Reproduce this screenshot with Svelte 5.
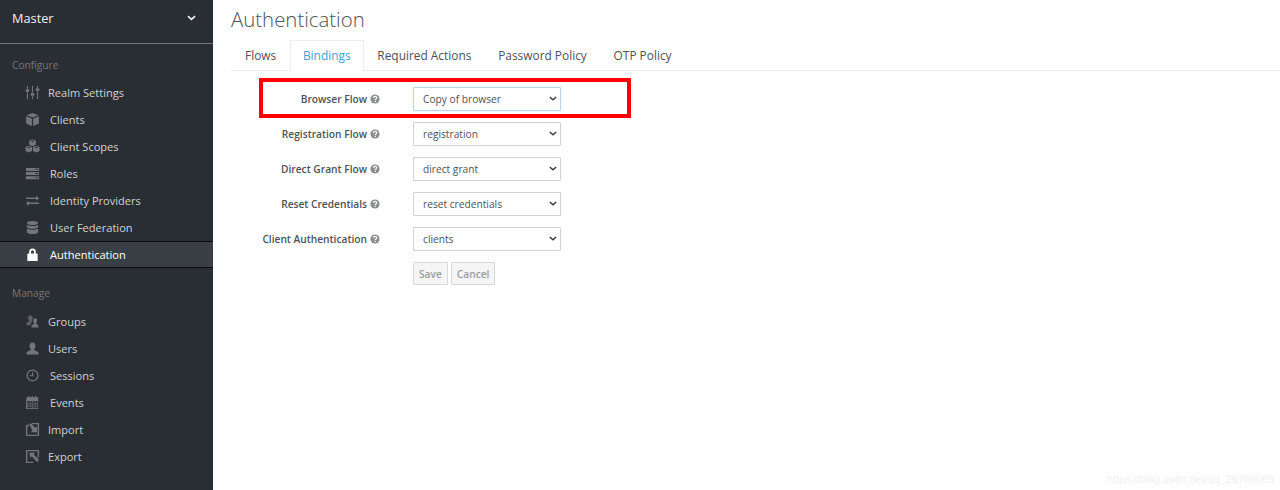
<script lang="ts">
	const configure = [
		{ id: 'sliders', label: 'Realm Settings', gap: 'narrow' },
		{ id: 'cube', label: 'Clients' },
		{ id: 'cubes', label: 'Client Scopes' },
		{ id: 'server', label: 'Roles' },
		{ id: 'exchange', label: 'Identity Providers' },
		{ id: 'database', label: 'User Federation' },
		{ id: 'lock', label: 'Authentication', active: true }
	];
	const manage = [
		{ id: 'users', label: 'Groups', gap: 'narrow' },
		{ id: 'user', label: 'Users', gap: 'narrow' },
		{ id: 'clock', label: 'Sessions' },
		{ id: 'calendar', label: 'Events' },
		{ id: 'import', label: 'Import', gap: 'narrow' },
		{ id: 'export', label: 'Export', gap: 'narrow' }
	];
	const sections = [
		{ title: 'Configure', items: configure },
		{ title: 'Manage', items: manage }
	];
	const tabs = ['Flows', 'Bindings', 'Required Actions', 'Password Policy', 'OTP Policy'];
	const bindings = [
		{ label: 'Browser Flow', value: 'Copy of browser', focus: true },
		{ label: 'Registration Flow', value: 'registration' },
		{ label: 'Direct Grant Flow', value: 'direct grant' },
		{ label: 'Reset Credentials', value: 'reset credentials' },
		{ label: 'Client Authentication', value: 'clients' }
	];
</script>

{#snippet icon(id)}
	<svg class="nav-icon" viewBox="0 0 16 16" fill="currentColor" aria-hidden="true">
		{#if id === 'sliders'}
			<path d="M2 1h1.200v3H2zM2 8h1.200v7H2zM7.400 1h1.200v7H7.400zM7.400 12h1.200v3H7.400zM12.800 1H14v2h-1.200zM12.800 7H14v8h-1.200z" />
			<path d="M.8 4.400h3.600v3H.8zM6.200 8.400h3.600v3H6.200zM11.600 3.400h3.600v3h-3.600z" />
		{:else if id === 'cube'}
			<path d="M8 1 14.500 3.400 8 5.800 1.500 3.400zM1.200 4.600 7.300 6.900V15L1.200 12.300zM8.700 6.900 14.800 4.600V12.300L8.700 15z" />
		{:else if id === 'cubes'}
			<path d="M8 0.500 11.600 1.900V6L8 7.500 4.400 6V1.900zM4 7.200 7.500 8.600V12.800L4 14.400.5 12.800V8.600zM12 7.200 15.500 8.600V12.800L12 14.400 8.500 12.800V8.600z" />
			<path fill="#292e34" d="M4.200 8.300 4 8.200 2 9 4 9.800 6 9zM12.200 8.300 12 8.200 10 9 12 9.800 14 9zM8 1.500 6 2.300 8 3.100 10 2.300z" />
		{:else if id === 'server'}
			<path d="M1 2h14v3.200H1zM1 6.400h14v3.200H1zM1 10.800h14V14H1z" />
			<path fill="#292e34" d="M11 3h3v1h-3zM11 7.500h3v1h-3zM11 11.900h3v1h-3z" />
		{:else if id === 'exchange'}
			<path d="M1 4.800h11V3l3 2.700-3 2.600V6.500H1zM15 10H4V8.300L1 11l3 2.600v-1.900h11z" />
		{:else if id === 'database'}
			<path d="M8 1c3.400 0 6 .9 6 2.200S11.400 5.400 8 5.400 2 4.500 2 3.200 4.600 1 8 1zM2 5c1 1 3.500 1.500 6 1.500S13 6 14 5v2.200C14 8.500 11.400 9.400 8 9.400S2 8.500 2 7.200zM2 9c1 1 3.500 1.500 6 1.500S13 10 14 9v3.800C14 14.100 11.400 15 8 15S2 14.100 2 12.800z" />
		{:else if id === 'lock'}
			<path fill-rule="evenodd" d="M4.500 7V5a3.500 3.500 0 0 1 7 0v2h1.300a.7.700 0 0 1 .7.700v6.600a.7.700 0 0 1-.7.700H3.200a.7.700 0 0 1-.7-.7V7.700a.7.700 0 0 1 .7-.7zm1.900 0h3.200V5a1.600 1.600 0 0 0-3.200 0z" />
		{:else if id === 'users'}
			<path opacity=".7" d="M6 1.500a2.300 2.300 0 0 1 2 3.500 3 3 0 0 1-1 2l1 1.200-1.800 1.300V12H1.500v-1.500c0-1.500 2-1.800 2.700-2.700V7A3 3 0 0 1 3.500 5 2.300 2.300 0 0 1 6 1.500z" />
			<path d="M10.500 4.500a2.400 2.400 0 0 1 2.300 2.800c0 1-.4 1.700-.9 2.300v.8c.8.800 2.600 1 2.600 2.600V14.500H7v-1.500c0-1.600 1.800-1.800 2.600-2.600v-.8c-.5-.6-.9-1.300-.9-2.300a2.400 2.400 0 0 1 1.800-2.800z" />
		{:else if id === 'user'}
			<path d="M8 1.500c2 0 3.200 1.400 3.200 3.500 0 1.500-.6 2.700-1.400 3.500v1.200c1.200 1 4.700 1.200 4.700 3.500v1.300h-13v-1.300c0-2.300 3.500-2.500 4.700-3.500V8.500C5.400 7.700 4.800 6.500 4.800 5c0-2.100 1.200-3.500 3.200-3.500z" />
		{:else if id === 'clock'}
			<path fill-rule="evenodd" d="M8 1.500a6.500 6.500 0 1 1 0 13 6.500 6.500 0 0 1 0-13zm0 1.400a5.100 5.100 0 1 0 0 10.200A5.100 5.100 0 0 0 8 2.900zM8.700 4.500v4.400H5V7.800h2.500V4.500z" />
		{:else if id === 'calendar'}
			<path fill-rule="evenodd" d="M1.500 2.500h2V1h1.500v1.500h2V1h1.500v1.500h2V1h1.500v1.500h2V15h-13zm1 4v7.500h11V6.500zM5 6.500h.8v7.500H5zm2.700 0h.8v7.500h-.8zm2.700 0h.8v7.500h-.8zM2.500 9h11v.8h-11zm0 2.500h11v.8h-11z" />
		{:else if id === 'import'}
			<path fill-rule="evenodd" d="M1 3h3.500v1.500h-2v9h11v-11h-6V1H15v14H1z" />
			<path d="M4.500 2.500 6 1l5 5 1.800-1.800V11H6l1.900-1.900z" />
		{:else if id === 'export'}
			<path fill-rule="evenodd" d="M1 1h14v8h-1.500V2.500h-11v11H9V15H1z" />
			<path d="M4.500 4H11L9.200 5.800 15 11.500 13 14 7.200 7.800 5.500 9.500z" />
		{/if}
	</svg>
{/snippet}

<div class="page">
	<aside class="sidebar">
		<div class="realm">
			<span>Master</span>
			<svg class="realm-caret" viewBox="0 0 10 6" aria-hidden="true">
				<path d="M1 1l4 3.600L9 1" fill="none" stroke="currentColor" stroke-width="1.800" />
			</svg>
		</div>
		{#each sections as section (section.title)}
			<h2 class="section-title">{section.title}</h2>
			<ul class="nav-list">
				{#each section.items as item (item.label)}
					<li class="nav-item" class:active={item.active} class:narrow={item.gap === 'narrow'}>
						{@render icon(item.id)}
						<span>{item.label}</span>
					</li>
				{/each}
			</ul>
		{/each}
	</aside>

	<main class="content">
		<h1>Authentication</h1>
		<nav class="tabs">
			{#each tabs as tab (tab)}
				<a class="tab" class:current={tab === 'Bindings'} href="#{tab}">{tab}</a>
			{/each}
		</nav>
		<form class="bindings">
			{#each bindings as row (row.label)}
				<div class="row">
					<span class="row-label">
						{row.label}
						<svg class="help" viewBox="0 0 10 10" aria-hidden="true">
							<circle cx="5" cy="5" r="4.600" fill="currentColor" />
							<path d="M3.500 3.900c0-2 3.200-2 3.200-.1 0 1.200-1.500 1.200-1.500 2.500" fill="none" stroke="#fff" stroke-width="1.100" />
							<path d="M4.600 6.900h1.200v1.200H4.600z" fill="#fff" />
						</svg>
					</span>
					<div class="select-wrap">
						<select class:focus={row.focus}>
							<option>{row.value}</option>
						</select>
						<svg class="select-caret" viewBox="0 0 10 6" aria-hidden="true">
							<path d="M1 1l4 3.600L9 1" fill="none" stroke="currentColor" stroke-width="1.700" />
						</svg>
					</div>
				</div>
			{/each}
			<div class="actions">
				<button type="button" disabled>Save</button>
				<button type="button" disabled>Cancel</button>
			</div>
		</form>
	</main>

	<div class="highlight"></div>
	<div class="watermark">https://blog.csdn.net/qq_29780089</div>
</div>

<style>
	:global(body) {
		margin: 0;
		background: #fff;
	}

	.page {
		position: relative;
		display: flex;
		width: 1280px;
		height: 490px;
		overflow: hidden;
		font-family: "Open Sans", "Noto Sans", sans-serif;
		font-size: 11.05px;
		color: #363636;
	}

	.sidebar {
		flex: none;
		width: 213px;
		background: #292e34;
		color: #d1d1d1;
	}

	.realm {
		display: flex;
		align-items: center;
		justify-content: space-between;
		box-sizing: border-box;
		height: 44px;
		padding: 0 17px 8px 12px;
		border-bottom: 1px solid #72767b;
		font-size: 12.75px;
		color: #f0f0f0;
	}

	.realm-caret {
		width: 9px;
		height: 6px;
		color: #f0f0f0;
	}

	.section-title {
		margin: 0;
		padding: 14px 0 0 12px;
		height: 21px;
		font-size: 10.2px;
		font-weight: 400;
		line-height: 15px;
		color: #72767b;
	}

	.section-title:nth-of-type(n + 2) {
		padding-top: 18px;
		height: 22px;
	}

	.nav-list {
		margin: 0;
		padding: 0;
		list-style: none;
	}

	.nav-item {
		display: flex;
		align-items: center;
		gap: 10px;
		box-sizing: border-box;
		height: 27px;
		padding-left: 25px;
		line-height: 27px;
		color: #d1d1d1;
	}

	.nav-item.narrow {
		gap: 8px;
	}

	.nav-item.active {
		background: #393f44;
		border-top: 1px solid #0b0d0e;
		border-bottom: 1px solid #0b0d0e;
		color: #fff;
	}

	.nav-icon {
		flex: none;
		width: 15px;
		height: 15px;
		color: #72767b;
	}

	.active .nav-icon {
		color: #fff;
	}

	.content {
		flex: 1;
		padding-left: 18px;
	}

	h1 {
		margin: 0;
		padding-top: 6px;
		height: 34px;
		font-size: 20.4px;
		font-weight: 300;
		line-height: 27px;
		color: #4d5258;
	}

	.tabs {
		display: flex;
		gap: 0.75px;
		height: 30px;
		padding-left: 1px;
		border-bottom: 1px solid #ededed;
	}

	.tab {
		box-sizing: border-box;
		height: 31px;
		padding: 0 12px;
		border: 1px solid transparent;
		font-size: 11.9px;
		line-height: 28px;
		color: #4d5258;
		text-decoration: none;
	}

	.tab.current {
		border-color: #ededed;
		border-bottom-color: #fff;
		color: #39a5dc;
	}

	.bindings {
		display: flex;
		flex-direction: column;
		gap: 11px;
		padding-top: 16px;
	}

	.row {
		display: flex;
		align-items: center;
	}

	.row-label {
		display: flex;
		align-items: center;
		justify-content: flex-end;
		gap: 3px;
		width: 149px;
		margin-right: 33px;
		font-size: 10.2px;
		font-weight: 600;
		white-space: nowrap;
		color: #4d5258;
	}

	.help {
		flex: none;
		width: 10px;
		height: 10px;
		color: #8b8d8f;
	}

	.select-wrap {
		position: relative;
		width: 148px;
		height: 24px;
	}

	select {
		appearance: none;
		box-sizing: border-box;
		width: 100%;
		height: 100%;
		padding: 0 9px;
		border: 1px solid #d1d1d1;
		border-radius: 1px;
		background: #fff;
		font-family: inherit;
		font-size: 10.2px;
		color: #4d5258;
		box-shadow: inset 0 0 1px #ededed;
	}

	select.focus {
		border-color: #b7d7ee;
		box-shadow: 0 0 2px #d5e8f5;
	}

	.select-caret {
		position: absolute;
		top: 9px;
		right: 4px;
		width: 8px;
		height: 5px;
		color: #363636;
	}

	.actions {
		display: flex;
		gap: 3px;
		padding: 0 0 0 182px;
	}

	button {
		box-sizing: border-box;
		height: 23px;
		padding: 0 5px;
		border: 1px solid #d8d8d8;
		border-radius: 1px;
		background: #f5f5f5;
		font-family: inherit;
		font-size: 10.2px;
		font-weight: 600;
		color: #9c9c9c;
	}

	/* annotation drawn over the screenshot */
	.highlight {
		position: absolute;
		top: 78px;
		left: 259px;
		box-sizing: border-box;
		width: 372px;
		height: 40px;
		border: 4px solid #fe0000;
	}

	.watermark {
		position: absolute;
		right: 6px;
		bottom: 5px;
		font-family: "Liberation Sans", Arial, sans-serif;
		font-size: 10.9px;
		color: #f0f0f0;
	}
</style>
